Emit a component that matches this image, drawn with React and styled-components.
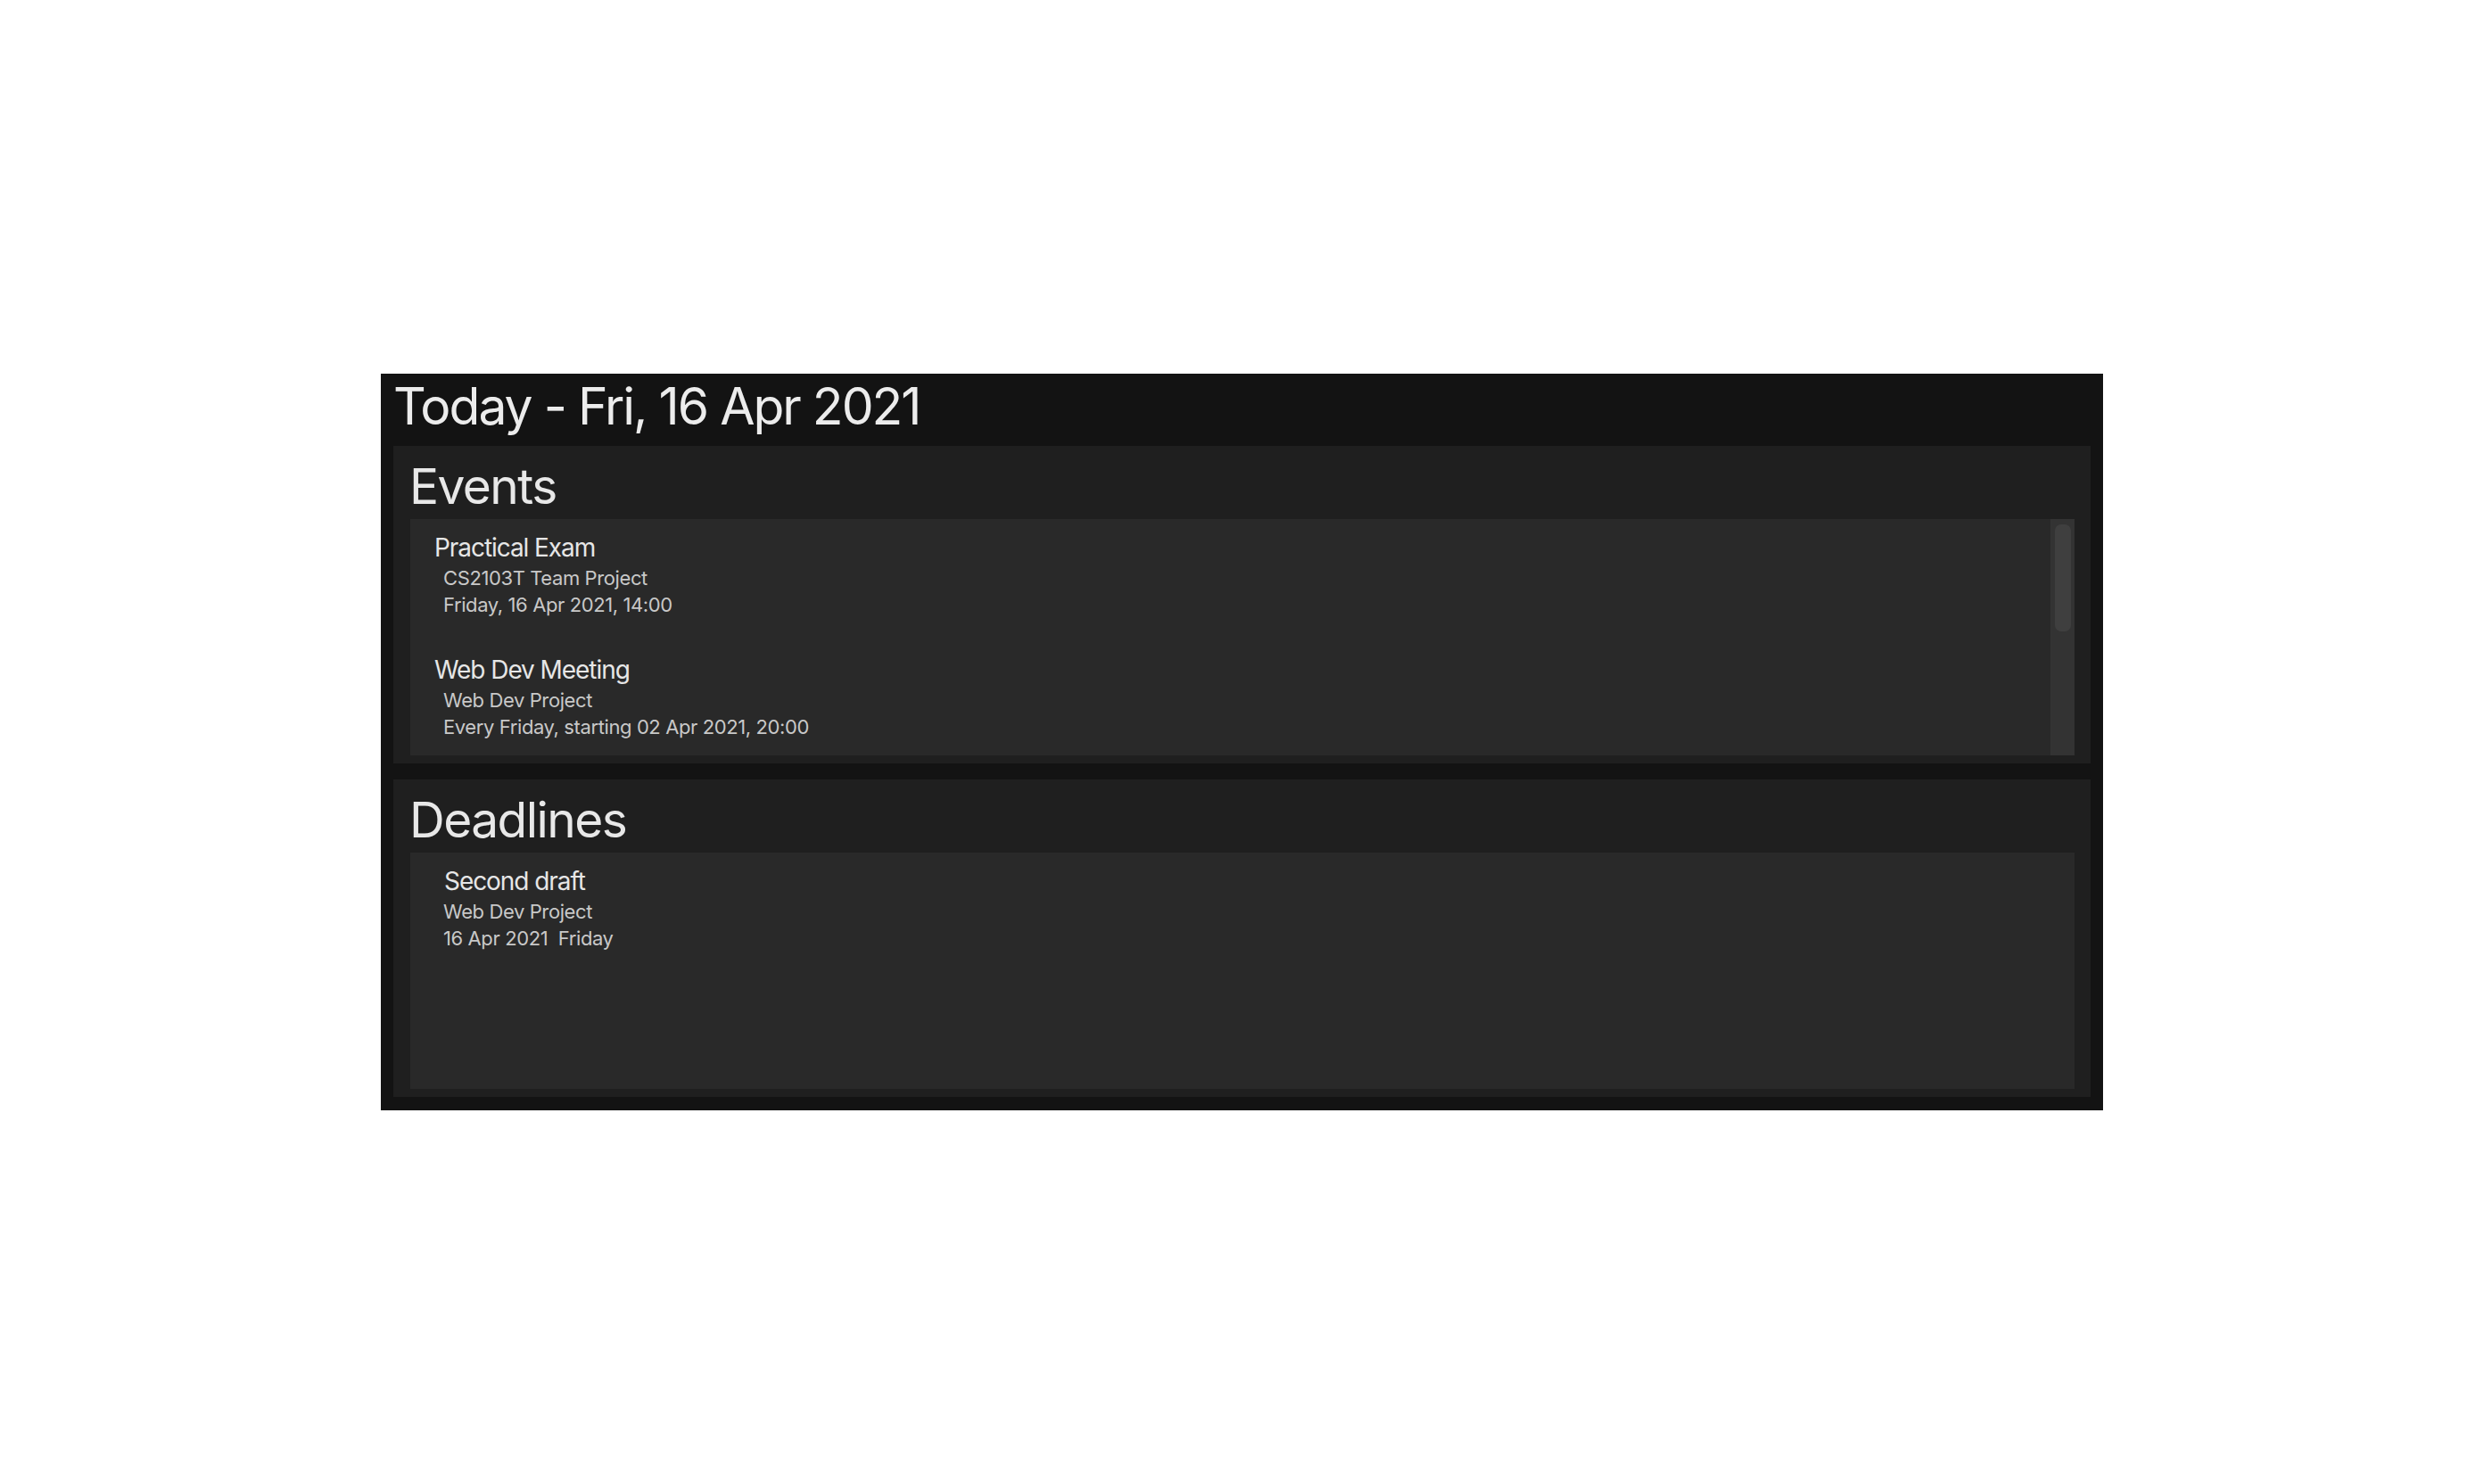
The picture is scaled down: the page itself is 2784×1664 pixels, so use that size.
import React from "react";
import styled, { createGlobalStyle, css } from "styled-components";

const GlobalStyle = createGlobalStyle`
  html, body { margin: 0; padding: 0; background: #ffffff; }
  * { box-sizing: border-box; }
`;

const text = css`
  white-space: nowrap;
  font-family: Inter, "Noto Sans", sans-serif;
  font-weight: 400;
`;

const Page = styled.div`
  padding: 419px 0 0 427px;
`;

const Window = styled.div`
  width: 1931px;
  height: 826px;
  background: #131313;
  padding: 2px 14px 15px 14px;
  display: flex;
  flex-direction: column;
`;

const Title = styled.h1`
  ${text};
  margin: 0 0 10px 0;
  font-size: 57px;
  line-height: 69px;
  letter-spacing: -0.035em;
  color: #ececec;
`;

const Sections = styled.div`
  display: flex;
  flex-direction: column;
  gap: 18px;
  flex: 1;
`;

const Section = styled.section`
  background: #1f1f1f;
  height: 356px;
  padding: 12px 18px 9px 19px;
  display: flex;
  flex-direction: column;
`;

const SectionHeading = styled.h2`
  ${text};
  margin: 0 0 4px -1px;
  font-size: 55px;
  line-height: 66px;
  letter-spacing: -0.028em;
  color: #e8e8e8;
`;

const List = styled.div`
  flex: 1;
  background: #292929;
  display: flex;
  overflow: hidden;
`;

const Items = styled.div`
  flex: 1;
  padding: 16px 0 0 ${(p) => p.$indent}px;
  display: flex;
  flex-direction: column;
  gap: 42px;
`;

const Item = styled.div`
  display: flex;
  flex-direction: column;
`;

const ItemTitle = styled.div`
  ${text};
  font-size: 28px;
  line-height: 32px;
  letter-spacing: -0.038em;
  color: #e6e6e6;
  margin: 0 0 3px 1px;
`;

const ItemLine = styled.div`
  ${text};
  font-size: 22px;
  line-height: 30px;
  letter-spacing: -0.018em;
  color: #c8c8c8;
  padding-left: ${(p) => p.$indent || 0}px;
`;

const ScrollTrack = styled.div`
  width: 27px;
  background: #333333;
  padding: 6px 4px 0 5px;
`;

const ScrollThumb = styled.div`
  height: 120px;
  border-radius: 7px;
  background: #3f3f3f;
`;

const events = [
  {
    title: "Practical Exam",
    lines: ["CS2103T Team Project", "Friday, 16 Apr 2021, 14:00"],
  },
  {
    title: "Web Dev Meeting",
    lines: ["Web Dev Project", "Every Friday, starting 02 Apr 2021, 20:00"],
  },
];

const deadlines = [
  {
    title: "Second draft",
    lines: ["Web Dev Project", "16 Apr 2021\u00a0 Friday"],
  },
];

export default function App() {
  return (
    <>
      <GlobalStyle />
      <Page>
        <Window>
          <Title>Today - Fri, 16 Apr 2021</Title>
          <Sections>
            <Section>
              <SectionHeading>Events</SectionHeading>
              <List>
                <Items $indent={26}>
                  {events.map((e) => (
                    <Item key={e.title}>
                      <ItemTitle>{e.title}</ItemTitle>
                      {e.lines.map((l) => (
                        <ItemLine key={l} $indent={11}>
                          {l}
                        </ItemLine>
                      ))}
                    </Item>
                  ))}
                </Items>
                <ScrollTrack>
                  <ScrollThumb />
                </ScrollTrack>
              </List>
            </Section>
            <Section>
              <SectionHeading>Deadlines</SectionHeading>
              <List>
                <Items $indent={37}>
                  {deadlines.map((d) => (
                    <Item key={d.title}>
                      <ItemTitle>{d.title}</ItemTitle>
                      {d.lines.map((l) => (
                        <ItemLine key={l}>{l}</ItemLine>
                      ))}
                    </Item>
                  ))}
                </Items>
              </List>
            </Section>
          </Sections>
        </Window>
      </Page>
    </>
  );
}
